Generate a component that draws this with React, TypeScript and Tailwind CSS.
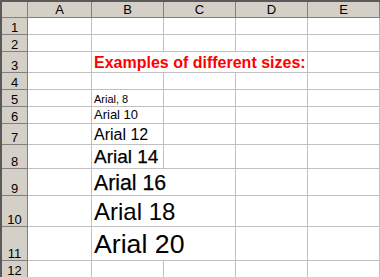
import React from "react";

const cols = ["A", "B", "C", "D", "E"];

interface Row {
  n: number;
  h: string;
  text?: string;
  size?: string;
  wide?: boolean;
  title?: boolean;
}

// row heights include the 1px grid line, like Excel's default 17px row
const rows: Row[] = [
  { n: 1, h: "h-[17px]" },
  { n: 2, h: "h-[17px]" },
  { n: 3, h: "h-[21px]", text: "Examples of different sizes:", size: "text-[16px]", wide: true, title: true },
  { n: 4, h: "h-[17px]" },
  { n: 5, h: "h-[17px]", text: "Arial, 8", size: "text-[11px]" },
  { n: 6, h: "h-[17px]", text: "Arial 10", size: "text-[13px]" },
  { n: 7, h: "h-[21px]", text: "Arial 12", size: "text-[16px]" },
  { n: 8, h: "h-[24px]", text: "Arial 14", size: "text-[19px] [-webkit-text-stroke:0.25px]" },
  { n: 9, h: "h-[27px]", text: "Arial 16", size: "text-[21.3px] [-webkit-text-stroke:0.25px]", wide: true },
  { n: 10, h: "h-[31px]", text: "Arial 18", size: "text-[24px]", wide: true },
  { n: 11, h: "h-[34px]", text: "Arial 20", size: "text-[26.7px]", wide: true },
  { n: 12, h: "h-[17px]" },
];

const gridCols = "grid grid-cols-[26px_64px_72px_72px_72px_72px]";

function RowHeader({ n, h }: { n: number; h: string }) {
  return (
    <div
      className={`${h} bg-[#d4d0c8] border-r border-b border-[#808080] flex items-end justify-center text-[13px] leading-none text-black`}
    >
      {n}
    </div>
  );
}

export default function App() {
  return (
    <div
      className="w-[380px] h-[277px] overflow-hidden bg-white border-t-2 border-l-2 border-[#5a5a5a]"
      style={{ fontFamily: '"Liberation Sans", Arial, sans-serif' }}
    >
      {/* column headers */}
      <div className={gridCols}>
        <div className="h-[16px] bg-[#d4d0c8] border-r border-b border-[#808080]" />
        {cols.map((c) => (
          <div
            key={c}
            className="h-[16px] bg-[#d4d0c8] border-r border-b border-[#808080] flex items-center justify-center text-[13px] leading-none text-black"
          >
            {c}
          </div>
        ))}
      </div>

      {rows.map((r) => (
        <div key={r.n} className={gridCols}>
          <RowHeader n={r.n} h={r.h} />
          <div className={`${r.h} border-r border-b border-[#c0c0c0]`} />
          <div
            className={`${r.h} relative border-b border-[#c0c0c0] ${
              r.wide ? "" : "border-r"
            }`}
          >
            {r.text && (
              <div
                className={`absolute left-0 bottom-0 z-10 pl-[2px] whitespace-nowrap leading-[1.15] ${r.size} ${
                  r.title ? "font-bold text-[#ff0000]" : "text-black"
                }`}
              >
                {r.text}
              </div>
            )}
          </div>
          <div
            className={`${r.h} border-b border-[#c0c0c0] ${r.title ? "" : "border-r"}`}
          />
          <div className={`${r.h} border-r border-b border-[#c0c0c0]`} />
          <div className={`${r.h} border-r border-b border-[#c0c0c0]`} />
        </div>
      ))}
    </div>
  );
}
